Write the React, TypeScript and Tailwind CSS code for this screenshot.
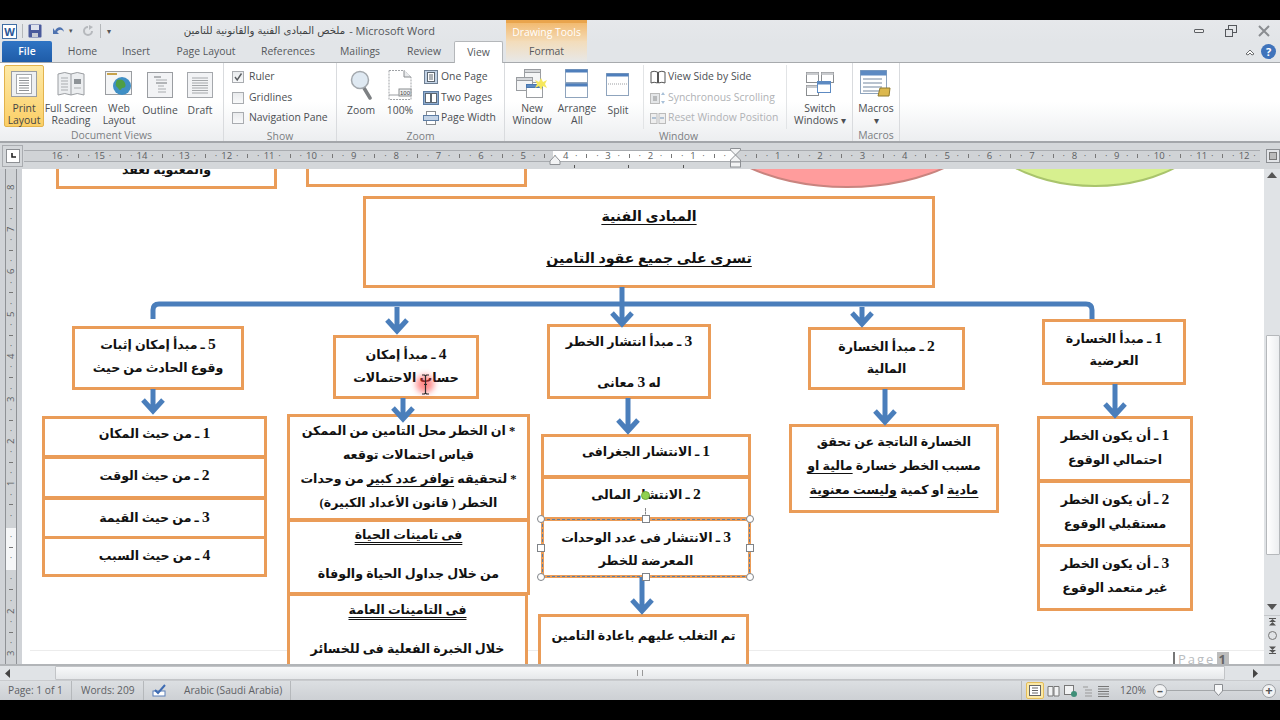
import React from "react";

const ui = "font-['Open_Sans','Liberation_Sans',sans-serif]";
const ar = "font-['Liberation_Serif','DejaVu_Sans',serif]";

/* ---------- small ribbon drawings ---------- */
function PageIcon({ w = 26, h = 26 }: { w?: number; h?: number }) {
  return (
    <svg width={w} height={h} viewBox="0 0 26 26">
      <rect x="0.5" y="0.5" width="25" height="25" fill="#eef0f2" stroke="#9a9da1" />
      <rect x="5.5" y="3.5" width="15" height="19" fill="#fff" stroke="#a5a8ac" />
      {[7, 9.5, 12, 14.5, 17, 19.5].map((y) => (
        <line key={y} x1="8" x2="18" y1={y} y2={y} stroke="#8e9194" />
      ))}
    </svg>
  );
}
function BookIcon() {
  return (
    <svg width="28" height="26" viewBox="0 0 28 26">
      <path d="M1 3 Q8 0 14 3 Q20 0 27 3 V24 Q20 21 14 24 Q8 21 1 24Z" fill="#eceef0" stroke="#9a9da1" />
      <line x1="14" y1="3" x2="14" y2="24" stroke="#9a9da1" />
      {[7, 10, 13, 16, 19].map((y) => (
        <line key={y} x1="4" x2="11" y1={y} y2={y} stroke="#a9acaf" />
      ))}
      <rect x="17" y="8" width="7" height="5" fill="#8e9397" />
      <line x1="17" x2="24" y1="17" y2="17" stroke="#a9acaf" />
    </svg>
  );
}
function GlobeIcon() {
  return (
    <svg width="28" height="26" viewBox="0 0 28 26">
      <rect x="0.5" y="0.5" width="26" height="23" fill="#f4f5f6" stroke="#9a9da1" />
      <rect x="2" y="2" width="10" height="2" fill="#c7a24b" />
      <circle cx="17" cy="15" r="9" fill="#3f8fc5" />
      <path d="M12 9 Q18 7 20 12 Q22 17 17 17 Q15 21 13 17 Q9 14 12 9Z" fill="#4f9e45" />
    </svg>
  );
}
function OutlineIcon() {
  return (
    <svg width="26" height="26" viewBox="0 0 26 26">
      <rect x="0.5" y="0.5" width="25" height="25" fill="#f2f3f5" stroke="#9a9da1" />
      <line x1="7" x2="14" y1="5" y2="5" stroke="#73777b" />
      <line x1="9" x2="20" y1="8" y2="8" stroke="#a9acaf" />
      <line x1="9" x2="20" y1="11" y2="11" stroke="#73777b" />
      <line x1="11" x2="17" y1="14" y2="14" stroke="#a9acaf" />
      <line x1="11" x2="19" y1="17" y2="17" stroke="#a9acaf" />
      <line x1="11" x2="19" y1="20" y2="20" stroke="#a9acaf" />
    </svg>
  );
}
function DraftIcon() {
  return (
    <svg width="26" height="26" viewBox="0 0 26 26">
      <rect x="0.5" y="0.5" width="25" height="25" fill="#f2f3f5" stroke="#a5a8ac" />
      {[6, 8.5, 11, 13.5, 16, 18.5, 21].map((y) => (
        <line key={y} x1="5" x2="21" y1={y} y2={y} stroke="#a4a7aa" />
      ))}
    </svg>
  );
}
function ZoomIcon() {
  return (
    <svg width="22" height="30" viewBox="0 0 22 30">
      <line x1="14" y1="18" x2="20" y2="28" stroke="#7d8083" strokeWidth="3.5" strokeLinecap="round" />
      <circle cx="10" cy="10" r="8.5" fill="#dfe9f2" stroke="#a3a8ad" strokeWidth="1.5" />
    </svg>
  );
}
function Zoom100Icon() {
  return (
    <svg width="24" height="30" viewBox="0 0 24 30">
      <path d="M1 .5 H16 L23 7 V29.5 H1 Z" fill="#fff" stroke="#a0a3a7" strokeDasharray="2 1" />
      <path d="M16 .5 V7 H23" fill="#e8eaec" stroke="#8a8d90" />
      <rect x="11" y="19" width="12" height="7" fill="#eef0f2" stroke="#8a8d90" />
      <text x="12" y="25" fontSize="6" fill="#444" fontFamily="Liberation Sans">100</text>
      <line x1="1" x2="11" y1="25" y2="25" stroke="#9a9da1" />
    </svg>
  );
}
function MiniIcon({ kind }: { kind: string }) {
  return (
    <svg width="16" height="14" viewBox="0 0 16 14">
      {kind === "one" && (
        <>
          <rect x="1.5" y=".5" width="13" height="13" fill="#c3d3e6" stroke="#6f7f92" />
          <rect x="4.5" y="2.5" width="7" height="9" fill="#fff" stroke="#5c6670" />
          <line x1="6" x2="10" y1="5" y2="5" stroke="#5c6670" />
          <line x1="6" x2="10" y1="7" y2="7" stroke="#5c6670" />
          <line x1="6" x2="10" y1="9" y2="9" stroke="#5c6670" />
        </>
      )}
      {kind === "two" && (
        <>
          <rect x=".5" y=".5" width="15" height="13" fill="#90add0" stroke="#5d7da3" />
          <rect x="2.5" y="2.5" width="5" height="9" fill="#fff" stroke="#5c6670" />
          <rect x="8.5" y="2.5" width="5" height="9" fill="#fff" stroke="#5c6670" />
        </>
      )}
      {kind === "width" && (
        <>
          <rect x="3.5" y=".5" width="9" height="13" fill="#fff" stroke="#8a8d90" />
          <rect x=".5" y="4.5" width="15" height="5" fill="#c3d3e6" stroke="#5d7da3" />
        </>
      )}
      {kind === "side" && (
        <>
          <path d="M1 2 Q4 .5 7.5 2 V13 Q4 11.5 1 13Z" fill="#fff" stroke="#555" />
          <path d="M8.5 2 Q12 .5 15 2 V13 Q12 11.5 8.5 13Z" fill="#fff" stroke="#555" />
        </>
      )}
      {kind === "sync" && (
        <>
          <rect x=".5" y="2.5" width="9" height="10" fill="#e4e6e8" stroke="#bbb" />
          <rect x="3" y="5" width="4" height="5" fill="#b8babc" />
          <path d="M13 1 L15 4 H11Z M13 13 L15 10 H11Z" fill="#a8c0d8" />
        </>
      )}
      {kind === "reset" && (
        <>
          <rect x=".5" y="2.5" width="6.5" height="10" fill="#eee" stroke="#bbb" />
          <rect x="9" y="2.5" width="6.5" height="10" fill="#eee" stroke="#bbb" />
          <path d="M2 7 H6 M14 7 H10" stroke="#9db4cb" strokeWidth="1.5" />
        </>
      )}
    </svg>
  );
}
function WinIcon({ kind }: { kind: string }) {
  if (kind === "new")
    return (
      <svg width="32" height="30" viewBox="0 0 32 30">
        <rect x="8.5" y=".5" width="16" height="13" fill="#f4f5f6" stroke="#9a9da1" />
        <rect x="8.5" y=".5" width="16" height="3" fill="#d5d7da" stroke="#9a9da1" />
        <rect x=".5" y="8.5" width="16" height="13" fill="#f4f5f6" stroke="#9a9da1" />
        <rect x=".5" y="8.5" width="16" height="3" fill="#d5d7da" stroke="#9a9da1" />
        <rect x="10.5" y="15.5" width="16" height="13" fill="#fff" stroke="#9a9da1" />
        <rect x="10.5" y="15.5" width="16" height="3" fill="#5d8ac2" stroke="#4a78b0" />
        <path d="M25 9 L27 13 L31 11 L29 15 L31 19 L27 17 L25 21 L23 17 L19 19 L21 15 L19 11 L23 13Z" fill="#f6e85d" />
      </svg>
    );
  if (kind === "arrange")
    return (
      <svg width="24" height="30" viewBox="0 0 24 30">
        <rect x=".5" y=".5" width="22" height="13" fill="#fff" stroke="#8fa4bd" />
        <rect x=".5" y=".5" width="22" height="3" fill="#4f7fbc" />
        <rect x=".5" y="14.5" width="22" height="14" fill="#fff" stroke="#8fa4bd" />
        <rect x=".5" y="14.5" width="22" height="3" fill="#4f7fbc" />
      </svg>
    );
  if (kind === "split")
    return (
      <svg width="24" height="24" viewBox="0 0 24 24">
        <rect x=".5" y=".5" width="22" height="22" fill="#fff" stroke="#8fa4bd" />
        <rect x=".5" y=".5" width="22" height="3" fill="#4f7fbc" />
        <line x1="2" x2="21" y1="11" y2="11" stroke="#9a9da1" strokeDasharray="1 1" />
      </svg>
    );
  if (kind === "switch")
    return (
      <svg width="28" height="24" viewBox="0 0 28 24">
        <rect x=".5" y=".5" width="12" height="10" fill="#fff" stroke="#8a8d90" />
        <rect x=".5" y=".5" width="12" height="2.5" fill="#c9cbce" />
        <rect x="15.5" y=".5" width="12" height="10" fill="#fff" stroke="#8a8d90" />
        <rect x="15.5" y=".5" width="12" height="2.5" fill="#c9cbce" />
        <rect x=".5" y="13.5" width="12" height="10" fill="#fff" stroke="#8a8d90" />
        <rect x=".5" y="13.5" width="12" height="2.5" fill="#c9cbce" />
        <rect x="11.5" y="9.5" width="13" height="11" fill="#fff" stroke="#5d8ac2" />
        <rect x="11.5" y="9.5" width="13" height="3" fill="#5d8ac2" />
      </svg>
    );
  return (
    <svg width="32" height="28" viewBox="0 0 32 28">
      <rect x=".5" y=".5" width="26" height="23" fill="#fff" stroke="#8fa4bd" />
      <rect x=".5" y=".5" width="26" height="5" fill="#5d8ac2" />
      {[9, 13, 17, 21].map((y) => (
        <line key={y} x1="3" x2="22" y1={y} y2={y} stroke="#b9c3cf" strokeWidth="2" />
      ))}
      <path d="M20 18 H30 L29 26 H18Z" fill="#dcb84e" stroke="#8f7a2e" />
    </svg>
  );
}

function BigBtn({ icon, a, b, w, active }: { icon: React.ReactNode; a: string; b?: string; w: string; active?: boolean }) {
  return (
    <div
      className={`${w} flex h-[62px] flex-col items-center rounded-[2px] pt-[3px] text-[10.4px] leading-[12px] ${
        active ? "border border-[#e2b34d] bg-gradient-to-b from-[#fde9a6] to-[#fbcf65] text-[#454545]" : "border border-transparent text-[#4c4f53]"
      }`}
    >
      <div className="flex h-[32px] items-center justify-center">{icon}</div>
      <span className="mt-[3px] whitespace-nowrap">{a}</span>
      {b && <span className="whitespace-nowrap">{b}</span>}
    </div>
  );
}
function Group({ w, label, children }: { w: string; label: string; children: React.ReactNode }) {
  return (
    <div className={`${w} flex shrink-0 flex-col border-r border-[#d9dbde]`}>
      <div className="flex h-[65px] items-start pt-[2px]">{children}</div>
      <div className="text-center text-[10.4px] leading-[16px] text-[#7b7e82]">{label}</div>
    </div>
  );
}
function Check({ on, label }: { on?: boolean; label: string }) {
  return (
    <div className="flex h-[20.5px] items-center gap-[5px]">
      <div className="flex h-[12px] w-[12px] items-center justify-center border border-[#a9acb0] bg-gradient-to-b from-[#e9ebed] to-[#f8f9fa]">
        {on && (
          <svg width="10" height="10" viewBox="0 0 10 10">
            <path d="M2 5 L4.2 8 L8.5 1.5" fill="none" stroke="#5a5d61" strokeWidth="1.4" />
          </svg>
        )}
      </div>
      <span className="whitespace-nowrap text-[10.4px] text-[#4c4f53]">{label}</span>
    </div>
  );
}
function MiniRow({ kind, label, dim }: { kind: string; label: string; dim?: boolean }) {
  return (
    <div className={`flex h-[20.5px] items-center gap-[2px] text-[10.4px] whitespace-nowrap ${dim ? "text-[#b0b2b5]" : "text-[#4c4f53]"}`}>
      <MiniIcon kind={kind} />
      <span>{label}</span>
    </div>
  );
}

/* ---------- rulers ---------- */
const rulerCells = ["16","15","14","13","12","11","10","9","8","7","6","5","4","3","2","1","","1","2","3","4","5","6","7","8","9","10","11","12"];
function RulerCell({ n, last }: { n: string; last?: boolean }) {
  return (
    <div className={`flex shrink-0 items-center ${last ? "w-[21px]" : "w-[42.4px]"}`}>
      <span className="w-[10.6px] text-center">{n}</span>
      <span className="w-[10.6px] text-center">·</span>
      {!last && <span className="flex w-[10.6px] justify-center"><span className="h-[4px] w-px bg-[#777]" /></span>}
      {!last && <span className="w-[10.6px] text-center">·</span>}
    </div>
  );
}
const vCells = ["8", "7", "6", "5", "4", "3", "2", "1", "", "", "2", "3"];
function VCell({ n, last }: { n: string; last?: boolean }) {
  return (
    <div className={`flex shrink-0 flex-col items-center ${last ? "h-[10.6px]" : "h-[42.4px]"}`}>
      <span className="flex h-[10.6px] -rotate-90 items-center">{n}</span>
      {!last && <span className="flex h-[10.6px] items-center">·</span>}
      {!last && <span className="flex h-[10.6px] items-center"><span className="h-px w-[4px] bg-[#777]" /></span>}
      {!last && <span className="flex h-[10.6px] items-center">·</span>}
    </div>
  );
}

/* ---------- diagram ---------- */
const orange = "border-[3px] border-[#ea9c58]";
type NodeDef = { c: string; lines: React.ReactNode[]; big?: boolean };
const U = ({ children }: { children: React.ReactNode }) => <span className="underline underline-offset-[3px]">{children}</span>;
const UU = ({ children }: { children: React.ReactNode }) => <span className="underline decoration-double underline-offset-[3px]">{children}</span>;

function Txt({ l }: { l: React.ReactNode }) {
  if (typeof l !== "string") return <>{l}</>;
  return (
    <>
      {l.split(/(\d)/).map((p, i) =>
        /^\d$/.test(p) ? (
          <span key={i} className="text-[15.5px]">{p}</span>
        ) : (
          <span key={i}>{p}</span>
        ),
      )}
    </>
  );
}

const nodes: NodeDef[] = [
  { c: "left-[56px] top-[120px] w-[221px] h-[70px] pt-[38px] leading-[20px]", lines: ["والمعنوية لعقد"] },
  { c: "left-[306px] top-[120px] w-[221px] h-[68px]", lines: [] },
  { big: true, c: "left-[363px] top-[197px] w-[572px] h-[92px] pt-[7px] leading-[21px]", lines: [<U>المبادى الفنية</U>, "\u00a0", <U>تسرى على جميع عقود التامين</U>] },

  { c: "left-[72px] top-[327px] w-[172px] h-[64px] pt-[3px] leading-[23px]", lines: ["5 ـ مبدأ إمكان إثبات", "وقوع الحادث من حيث"] },
  { c: "left-[333px] top-[336px] w-[146px] h-[64px] pt-[4px] leading-[23px]", lines: ["4 ـ مبدأ إمكان", "حساب الاحتمالات"] },
  { c: "left-[547px] top-[325px] w-[164px] h-[75px] pt-[4px] leading-[19.5px]", lines: ["3 ـ مبدأ انتشار الخطر", "\u00a0", "له 3 معانى"] },
  { c: "left-[808px] top-[328px] w-[157px] h-[63px] pt-[5px] leading-[22px]", lines: ["2 ـ مبدأ الخسارة", "المالية"] },
  { c: "left-[1042px] top-[320px] w-[144px] h-[66px] pt-[5px] leading-[22px]", lines: ["1 ـ مبدأ الخسارة", "العرضية"] },

  { c: "left-[42px] top-[417px] w-[225px] h-[42px] pt-[2px] leading-[24px]", lines: ["1 ـ من حيث المكان"] },
  { c: "left-[42px] top-[457px] w-[225px] h-[43px] pt-[4px] leading-[24px]", lines: ["2 ـ من حيث الوقت"] },
  { c: "left-[42px] top-[498px] w-[225px] h-[42px] pt-[5px] leading-[24px]", lines: ["3 ـ من حيث القيمة"] },
  { c: "left-[42px] top-[537px] w-[225px] h-[41px] pt-[4px] leading-[24px]", lines: ["4 ـ من حيث السبب"] },

  { c: "left-[287px] top-[415px] w-[243px] h-[107px] pt-[2px] leading-[24px]", lines: ["* ان الخطر محل التامين من الممكن", "قياس احتمالات توقعه", <>* لتحقيقه <U>توافر عدد كبير</U> من وحدات</>, "الخطر  ( قانون الأعداد الكبيرة)"] },
  { c: "left-[287px] top-[520px] w-[243px] h-[76px] pt-[4px] leading-[19.5px]", lines: [<UU>فى تامينات الحياة</UU>, "\u00a0", "من خلال جداول الحياة والوفاة"] },
  { c: "left-[287px] top-[594px] w-[241px] h-[90px] pt-[5px] leading-[19.5px]", lines: [<UU>فى التامينات العامة</UU>, "\u00a0", "خلال الخبرة الفعلية فى للخسائر"] },

  { c: "left-[541px] top-[435px] w-[210px] h-[44px] pt-[2px] leading-[24px]", lines: ["1 ـ الانتشار الجغرافى"] },
  { c: "left-[541px] top-[477px] w-[210px] h-[44px] pt-[3px] leading-[24px]", lines: ["2  ـ  الانتشار المالى"] },
  { c: "left-[541px] top-[519px] w-[210px] h-[60px] pt-[4px] leading-[23px]", lines: ["3 ـ الانتشار فى عدد الوحدات", "المعرضة للخطر"] },
  { c: "left-[538px] top-[615px] w-[211px] h-[70px] pt-[7px] leading-[24px]", lines: ["تم التغلب عليهم باعادة التامين"] },

  { c: "left-[789px] top-[425px] w-[210px] h-[89px] pt-[3px] leading-[24px]", lines: ["الخسارة الناتجة عن تحقق", <>مسبب الخطر خسارة <U>مالية او</U></>, <><U>مادية</U> او كمية <U>وليست معنوية</U></>] },

  { c: "left-[1037px] top-[417px] w-[156px] h-[66px] pt-[4px] leading-[24px]", lines: ["1 ـ أن يكون الخطر", "احتمالي الوقوع"] },
  { c: "left-[1037px] top-[481px] w-[156px] h-[67px] pt-[4px] leading-[24px]", lines: ["2 ـ أن يكون الخطر", "مستقبلي الوقوع"] },
  { c: "left-[1037px] top-[545px] w-[156px] h-[67px] pt-[4px] leading-[24px]", lines: ["3 ـ أن يكون الخطر", "غير متعمد الوقوع"] },
];

const arrows: [number, number, number][] = [
  [622, 288, 325], [397, 308, 332], [862, 308, 325], [153, 390, 412], [403, 399, 420],
  [628, 399, 432], [885, 390, 423], [1115, 385, 416], [642, 578, 612],
];

const Handle = ({ c, square }: { c: string; square?: boolean }) => (
  <div className={`absolute h-[8px] w-[8px] border border-[#7f8388] bg-white ${square ? "" : "rounded-full"} ${c}`} />
);

export default function App() {
  return (
    <div className={`flex h-[720px] w-[1280px] flex-col overflow-hidden bg-black ${ui}`}>
      <div className="h-[20px] shrink-0 bg-black" />

      {/* title bar */}
      <div className="flex h-[22px] shrink-0 items-center bg-gradient-to-b from-[#e6e8eb] to-[#e2e5e8] text-[11px] text-[#54575b]">
        <div className="flex w-[506px] shrink-0 items-center">
          <div className="ml-[2px] flex h-[15px] w-[15px] items-center justify-center border border-[#3f6ea5] bg-white text-[11px] font-bold leading-none text-[#2b5797]">W</div>
          <div className="mx-[5px] h-[14px] w-px bg-[#b4b7ba]" />
          <svg width="14" height="14" viewBox="0 0 14 14"><rect x=".5" y=".5" width="13" height="13" rx="1" fill="#4a5a9c" /><rect x="3" y="1" width="8" height="5" fill="#dfe3ee" /><rect x="4" y="9" width="6" height="4" fill="#c9ccd6" /></svg>
          <svg className="ml-[10px]" width="14" height="12" viewBox="0 0 14 12"><path d="M3 6 C5 1 11 1 12 7 C10 4 7 4 5 7 L7 9 H1 V3Z" fill="#4f73b0" /></svg>
          <span className="ml-[3px] text-[7px] text-[#555]">▾</span>
          <svg className="ml-[9px]" width="12" height="12" viewBox="0 0 12 12"><path d="M6 2 A4 4 0 1 0 10 6" fill="none" stroke="#b6b9bd" strokeWidth="2" /><path d="M7 0 V5 L11 2Z" fill="#b6b9bd" /></svg>
          <div className="mx-[6px] h-[14px] w-px bg-[#b4b7ba]" />
          <span className="text-[8px] leading-none text-[#555]">▾</span>
          <div className="ml-auto flex items-center whitespace-nowrap pr-[71px]">
            <span dir="rtl" className="text-[10.2px] text-[#3d3f42] font-['DejaVu_Sans',sans-serif]">ملخص المبادى الفنية والقانونية للتامين</span>
            <span className="ml-[4px]">-  Microsoft Word</span>
          </div>
        </div>
        {/* Drawing Tools context header */}
        <div className="flex h-[22px] w-[81px] shrink-0 items-center justify-center border-t-[3px] border-[#e9a44c] bg-gradient-to-b from-[#f2ba6f] to-[#f3dcb9] text-[10.4px] text-white">Drawing Tools</div>
        <div className="flex-1" />
        <div className="flex items-center gap-[21px] pr-[10px]">
          <div className="h-[4px] w-[10px] rounded-[1px] border border-[#5d6064] bg-[#eee]" />
          <svg width="12" height="12" viewBox="0 0 12 12"><rect x="3.5" y=".5" width="8" height="7" fill="none" stroke="#55585c" /><rect x=".5" y="4.5" width="7" height="7" fill="#e3e5e8" stroke="#55585c" /></svg>
          <svg width="12" height="12" viewBox="0 0 12 12"><path d="M1 1 L11 11 M11 1 L1 11" stroke="#8a8d91" strokeWidth="2" /></svg>
        </div>
      </div>

      {/* tabs */}
      <div className="relative flex h-[21px] shrink-0 items-end border-b border-[#a7aaad] bg-[#e2e5e8] text-[10.4px] text-[#55585c]">
        <div className="ml-[2px] flex h-[21px] w-[50px] items-center justify-center rounded-t-[2px] bg-gradient-to-b from-[#2f74c4] to-[#1f5ca8] pt-[1px] font-semibold text-white">File</div>
        <div className="flex h-[21px] w-[61px] items-center justify-center pt-[1px]">Home</div>
        <div className="flex h-[21px] w-[46px] items-center justify-center pt-[1px]">Insert</div>
        <div className="ml-[10px] flex h-[21px] w-[74px] items-center justify-center whitespace-nowrap pt-[1px]">Page Layout</div>
        <div className="ml-[15px] flex h-[21px] w-[60px] items-center justify-center pt-[1px]">References</div>
        <div className="ml-[17px] flex h-[21px] w-[50px] items-center justify-center pt-[1px]">Mailings</div>
        <div className="ml-[19px] flex h-[21px] w-[40px] items-center justify-center pt-[1px]">Review</div>
        <div className="relative top-px ml-[10px] flex h-[22px] w-[49px] items-center justify-center rounded-t-[2px] border border-b-0 border-[#b4b7ba] bg-white pt-[1px]">View</div>
        <div className="ml-[3px] flex h-[21px] w-[81px] items-center justify-center bg-gradient-to-b from-[#f3dcb9] to-[#e7e8e8] pt-[1px]">Format</div>
        <div className="flex-1" />
        <svg className="mb-[6px] mr-[6px]" width="10" height="8" viewBox="0 0 10 8"><path d="M1 6 L5 2 L9 6 L7 7 L5 5 L3 7Z" fill="#fff" stroke="#4a4c4f" strokeWidth=".8" /></svg>
        <div className="mb-[3px] mr-[4px] flex h-[15px] w-[15px] items-center justify-center rounded-full bg-[#3f73bb] text-[11px] font-bold leading-none text-white">?</div>
      </div>

      {/* ribbon */}
      <div className="flex h-[80px] shrink-0 border-b-2 border-[#a3a6aa] bg-gradient-to-b from-white via-white to-[#eceef0]">
        <Group w="w-[224px]" label="Document Views">
          <div className="ml-[4px] flex">
            <BigBtn w="w-[40px]" active icon={<PageIcon />} a="Print" b="Layout" />
            <BigBtn w="w-[54px]" icon={<BookIcon />} a="Full Screen" b="Reading" />
            <BigBtn w="w-[42px]" icon={<GlobeIcon />} a="Web" b="Layout" />
            <BigBtn w="w-[40px]" icon={<OutlineIcon />} a="Outline" />
            <BigBtn w="w-[40px]" icon={<DraftIcon />} a="Draft" />
          </div>
        </Group>
        <Group w="w-[113px]" label="Show">
          <div className="ml-[8px] flex flex-col pt-[2px]">
            <Check on label="Ruler" />
            <Check label="Gridlines" />
            <Check label="Navigation Pane" />
          </div>
        </Group>
        <Group w="w-[168px]" label="Zoom">
          <div className="ml-[4px] flex">
            <BigBtn w="w-[40px]" icon={<ZoomIcon />} a="Zoom" />
            <BigBtn w="w-[38px]" icon={<Zoom100Icon />} a="100%" />
            <div className="ml-[4px] flex flex-col pt-[2px]">
              <MiniRow kind="one" label="One Page" />
              <MiniRow kind="two" label="Two Pages" />
              <MiniRow kind="width" label="Page Width" />
            </div>
          </div>
        </Group>
        <Group w="w-[348px]" label="Window">
          <div className="ml-[4px] flex">
            <BigBtn w="w-[46px]" icon={<WinIcon kind="new" />} a="New" b="Window" />
            <BigBtn w="w-[44px]" icon={<WinIcon kind="arrange" />} a="Arrange" b="All" />
            <BigBtn w="w-[38px]" icon={<WinIcon kind="split" />} a="Split" />
            <div className="ml-[6px] w-[143px] border-l border-[#e2e4e6] pl-[6px] pt-[2px]">
              <MiniRow kind="side" label="View Side by Side" />
              <MiniRow kind="sync" dim label="Synchronous Scrolling" />
              <MiniRow kind="reset" dim label="Reset Window Position" />
            </div>
            <div className="border-l border-[#e2e4e6]">
              <BigBtn w="w-[66px]" icon={<WinIcon kind="switch" />} a="Switch" b="Windows ▾" />
            </div>
          </div>
        </Group>
        <Group w="w-[47px]" label="Macros">
          <BigBtn w="w-[46px]" icon={<WinIcon kind="macro" />} a="Macros" b="▾" />
        </Group>
      </div>

      {/* ruler row */}
      <div className="relative flex h-[26px] shrink-0 items-center bg-[#d4d7da]">
        <div className="ml-[2px] flex h-[22px] w-[21px] items-center justify-center border border-[#a9acb0]">
          <div className="flex h-[14px] w-[14px] items-center justify-center border border-[#8d9094] bg-white">
            <svg width="8" height="8" viewBox="0 0 8 8"><path d="M3 1 V5 H7" fill="none" stroke="#222" strokeWidth="1.6" /></svg>
          </div>
        </div>
        <div className="relative ml-px flex h-[12px] w-[1236px] items-center overflow-hidden border-y border-[#a9acb0] bg-[#d0d3d6] pl-[27.7px] text-[9.5px] leading-none text-[#5c5f63]">
          <div className="absolute left-[529px] top-0 h-full w-[182px] bg-white" />
          <div className="relative flex">
            {rulerCells.map((n, i) => (
              <RulerCell key={i} n={n} last={i === rulerCells.length - 1} />
            ))}
          </div>
        </div>
        <div className="ml-[6px] flex h-[14px] w-[14px] items-center justify-center border border-[#8d9094] bg-[#e3e5e8]">
          <div className="h-[8px] w-[8px] border border-[#777] bg-[#bbb]" />
        </div>
        {/* indent markers on the ruler */}
        <svg className="absolute left-[729px] top-[5px]" width="13" height="20" viewBox="0 0 13 20">
          <path d="M1.5 .5 H11.5 V2 L6.5 7 L11.5 12 V14 H1.5 V12 L6.5 7 L1.5 2Z" fill="#f2f3f4" stroke="#8d9094" />
          <rect x="1.5" y="14" width="10" height="5" fill="#f2f3f4" stroke="#8d9094" />
        </svg>
        <svg className="absolute left-[549px] top-[12px]" width="12" height="10" viewBox="0 0 12 10"><path d="M6 .5 L11 6 V9.5 H1 V6Z" fill="#f2f3f4" stroke="#8d9094" /></svg>
        <div className="absolute left-[574px] top-[22px] h-[3px] w-px bg-[#555]" />
        <div className="absolute left-[628px] top-[22px] h-[3px] w-px bg-[#555]" />
        <div className="absolute left-[683px] top-[22px] h-[3px] w-px bg-[#555]" />
      </div>

      {/* document area */}
      <div className="flex h-[495px] shrink-0 overflow-hidden">
        {/* vertical ruler */}
        <div className="flex w-[22px] shrink-0 bg-[#d0d3d7]">
          <div className="relative ml-[5px] h-full w-[12px] border-x border-[#8f9296] bg-[#cfd2d5] pt-[12.7px] text-[9.5px] leading-none text-[#5c5f63]">
            <div className="absolute left-0 top-[359px] h-[42px] w-full bg-[#f6f7f8]" />
            <div className="relative flex flex-col">
              {vCells.map((n, i) => (
                <VCell key={i} n={n} last={i === vCells.length - 1} />
              ))}
            </div>
          </div>
        </div>
        {/* page */}
        <div className="relative flex-1 overflow-hidden bg-white">
          <div className="absolute left-[-22px] top-[-170px] h-[720px] w-[1280px]">
            {/* page footer rule lies behind the shapes */}
            <div className="absolute left-[30px] top-[651px] h-px w-[1234px] bg-[#ececec]" />

            {/* shapes cut at the top of the view */}
            <div className="absolute left-[697px] top-[29px] h-[160px] w-[300px] rounded-[50%] border-2 border-[#c9847f] bg-[#ff9c9c]" />
            <div className="absolute left-[969px] top-[28px] h-[160px] w-[252px] rounded-[50%] border-2 border-[#a9c46c] bg-[#d7f08f]" />

            {nodes.map((n, i) => (
              <div key={i} dir="rtl" className={`absolute box-border bg-white text-center font-bold text-[#111] ${n.big ? "text-[14.2px]" : "text-[12.6px]"} ${orange} ${ar} ${n.c}`}>
                {n.lines.map((l, j) => (
                  <div key={j} className="whitespace-nowrap"><Txt l={l} /></div>
                ))}
              </div>
            ))}

            {/* connector arrows */}
            <svg className="absolute left-0 top-0" width="1280" height="720" fill="none" stroke="#4a7ebb" strokeWidth="5">
              <path d="M153 320 V311 Q153 305 159 305 H1086 Q1092 305 1092 311 V320" />
              {arrows.map(([x, a, b]) => (
                <path key={`${x}${a}`} d={`M${x} ${a} V${b} M${x - 10} ${b - 11} L${x} ${b} L${x + 10} ${b - 11}`} />
              ))}
            </svg>

            {/* selected box handles */}
            <div className="absolute left-[542px] top-[520px] h-[58px] w-[208px] border border-dashed border-[#5b7fa6]" />
            <div className="absolute left-[645px] top-[509px] h-[10px] w-0 border-l border-dashed border-[#888]" />
            <div className="absolute left-[641px] top-[492px] h-[9px] w-[9px] rounded-full border border-[#6fa83e] bg-[#8fd14f]" />
            <Handle c="left-[537px] top-[516px]" />
            <Handle c="left-[746px] top-[516px]" />
            <Handle c="left-[537px] top-[574px]" />
            <Handle c="left-[746px] top-[574px]" />
            <Handle square c="left-[642px] top-[516px]" />
            <Handle square c="left-[642px] top-[574px]" />
            <Handle square c="left-[537px] top-[545px]" />
            <Handle square c="left-[746px] top-[545px]" />

            {/* mouse pointer highlight */}
            <div className="absolute left-[416px] top-[376px] h-[18px] w-[18px] rounded-full bg-[#ff3b3b] opacity-60 blur-[3px]" />
            <svg className="absolute left-[421px] top-[375px]" width="9" height="21" viewBox="0 0 9 21">
              <path d="M1 1 H3.5 L4.5 2 L5.5 1 H8 M4.5 2 V19 M1 20 H3.5 L4.5 19 L5.5 20 H8 M3 10.5 H6" fill="none" stroke="#2b2b2b" strokeWidth="1.2" />
            </svg>

            {/* page footer */}
            <div className="absolute left-[1173px] top-[653px] flex h-[12px] items-start text-[13px] leading-[15px] tracking-[2px] text-[#b9bcc0]">
              <span className="mr-[3px] h-[12px] w-[2px] bg-[#777]" />Page
              <span className="ml-[2px] bg-[#bdbdbd] px-[1px] font-bold text-[#666]">1</span>
            </div>
          </div>
        </div>
        {/* vertical scrollbar */}
        <div className="flex w-[16px] shrink-0 flex-col items-center bg-[#e0e3e6]">
          <svg className="mt-[3px] shrink-0" width="10" height="6" viewBox="0 0 10 6"><path d="M5 0 L10 6 H0Z" fill="#555" /></svg>
          <div className="ml-px mt-[157px] h-[220px] w-[14px] shrink-0 rounded-[1px] border border-[#b5b8bb] bg-gradient-to-r from-white to-[#eceef0]" />
          <svg className="mt-[49px] shrink-0" width="10" height="6" viewBox="0 0 10 6"><path d="M0 0 H10 L5 6Z" fill="#555" /></svg>
          <div className="mt-[5px] w-full border-t border-[#c4c7ca]" />
          <svg className="mt-[2px] shrink-0" width="9" height="8" viewBox="0 0 9 8"><path d="M1 0 H8 V1 H1Z M4.5 1 L8 4 H1Z M4.5 4 L8 7.5 H1Z" fill="#555" /></svg>
          <div className="mt-[5px] h-[9px] w-[9px] shrink-0 rounded-full border border-[#777]" />
          <svg className="mt-[6px] shrink-0" width="9" height="8" viewBox="0 0 9 8"><path d="M1 .5 H8 L4.5 4Z M1 4 H8 L4.5 7Z M1 7 H8 V8 H1Z" fill="#555" /></svg>
        </div>
      </div>

      {/* horizontal scrollbar */}
      <div className="flex h-[16px] shrink-0 items-center border-t-2 border-[#b2b5b8] bg-[#e0e3e6]">
        <svg className="ml-[5px]" width="5" height="9" viewBox="0 0 5 9"><path d="M5 0 V9 L0 4.5Z" fill="#444" /></svg>
        <div className="ml-[45px] flex h-[14px] w-[1170px] items-center justify-center rounded-[1px] border border-[#c2c4c7] bg-gradient-to-b from-[#f8f9fa] to-[#e6e8ea]">
          <div className="h-[6px] w-[6px] border-x border-[#999]" />
        </div>
        <svg className="ml-[28px]" width="5" height="9" viewBox="0 0 5 9"><path d="M0 0 V9 L5 4.5Z" fill="#444" /></svg>
      </div>

      {/* status bar */}
      <div className="flex h-[20px] shrink-0 items-center border-t border-[#c9cbce] bg-gradient-to-b from-[#dcdfe2] to-[#cdd0d4] text-[10.2px] text-[#5e6165]">
        <div className="flex h-full w-[72px] items-center border-r border-[#b5b8bb] pl-[8px]">Page: 1 of 1</div>
        <div className="flex h-full w-[72px] items-center border-r border-[#b5b8bb] pl-[9px]">Words: 209</div>
        <div className="flex h-full w-[147px] items-center border-r border-[#b5b8bb] pl-[8px]">
          <svg width="16" height="14" viewBox="0 0 16 14"><rect x="1" y="7" width="12" height="5" fill="#fff" stroke="#5a7fb8" /><path d="M3 6 L6 9 L13 1" fill="none" stroke="#3f6cb3" strokeWidth="2" /></svg>
          <span className="ml-[16px] whitespace-nowrap">Arabic (Saudi Arabia)</span>
        </div>
        <div className="flex-1" />
        <div className="flex h-full items-center border-l border-[#b5b8bb] pl-[4px]">
          <div className="flex h-[17px] w-[18px] items-center justify-center rounded-[2px] border border-[#e4bd59] bg-[#fbe9a7]">
            <svg width="12" height="11" viewBox="0 0 12 11"><rect x=".5" y=".5" width="11" height="10" fill="#fff" stroke="#666" /><path d="M3 3 H9 M3 5.5 H9 M3 8 H9" stroke="#666" /></svg>
          </div>
          <svg className="ml-[3px]" width="13" height="12" viewBox="0 0 13 12"><path d="M1 1.5 H6 V11 H1Z M7 1.5 H12 V11 H7Z" fill="#f2f3f4" stroke="#777" /></svg>
          <svg className="ml-[4px]" width="13" height="12" viewBox="0 0 13 12"><rect x=".5" y=".5" width="9" height="9" fill="#f2f3f4" stroke="#777" /><circle cx="10" cy="9" r="3" fill="#3f8f78" /></svg>
          <svg className="ml-[3px]" width="13" height="12" viewBox="0 0 13 12"><path d="M3 2 H8 M5 5 H12 M5 8 H12 M5 11 H12" stroke="#999" /></svg>
          <svg className="ml-[4px]" width="13" height="12" viewBox="0 0 13 12"><path d="M1 1.5 H12 M1 4 H12 M1 6.5 H12 M1 9 H12 M1 11.5 H12" stroke="#777" /></svg>
          <span className="ml-[10px]">120%</span>
          <div className="ml-[7px] flex h-[14px] w-[14px] items-center justify-center rounded-full border border-[#9a9da1] bg-[#f2f3f4] text-[12px] font-bold leading-none text-[#555]">–</div>
          <div className="relative h-px w-[95px] bg-[#a4a7aa]">
            <svg className="absolute left-[47px] top-[-6px]" width="9" height="12" viewBox="0 0 9 12"><path d="M.5 .5 H8.5 V7 L4.5 11.5 L.5 7Z" fill="#f7f8f9" stroke="#8a8d91" /></svg>
          </div>
          <div className="mr-[4px] flex h-[14px] w-[14px] items-center justify-center rounded-full border border-[#9a9da1] bg-[#f2f3f4] text-[13px] font-bold leading-none text-[#555]">+</div>
        </div>
      </div>

      <div className="flex-1 bg-black" />
    </div>
  );
}
